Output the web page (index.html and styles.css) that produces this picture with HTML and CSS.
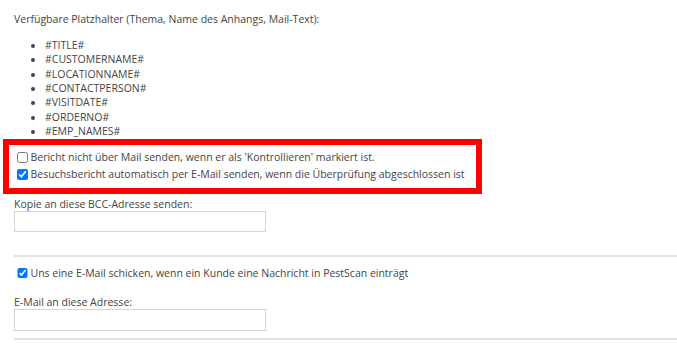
FILE: index.html
```html
<!DOCTYPE html>
<html lang="de">
<head>
<meta charset="utf-8">
<title>E-Mail Einstellungen</title>
<link rel="stylesheet" href="styles.css">
</head>
<body>
<div class="page">
  <p class="intro">Verfügbare Platzhalter (Thema, Name des Anhangs, Mail-Text):</p>
  <ul class="placeholders">
    <li>#TITLE#</li>
    <li>#CUSTOMERNAME#</li>
    <li>#LOCATIONNAME#</li>
    <li>#CONTACTPERSON#</li>
    <li>#VISITDATE#</li>
    <li>#ORDERNO#</li>
    <li>#EMP_NAMES#</li>
  </ul>
  <div class="highlight">
    <label class="check-row"><input class="check" type="checkbox">Bericht nicht über Mail senden, wenn er als 'Kontrollieren' markiert ist.</label>
    <label class="check-row"><input class="check" type="checkbox" checked>Besuchsbericht automatisch per E-Mail senden, wenn die Überprüfung abgeschlossen ist</label>
  </div>
  <label class="field-label field-label-bcc">Kopie an diese BCC-Adresse senden:</label>
  <input class="text-input" type="text">
  <div class="divider divider-first"></div>
  <label class="check-row check-row-notify"><input class="check" type="checkbox" checked>Uns eine E-Mail schicken, wenn ein Kunde eine Nachricht in PestScan einträgt</label>
  <label class="field-label field-label-mail">E-Mail an diese Adresse:</label>
  <input class="text-input text-input-tall" type="text">
  <div class="divider divider-last"></div>
</div>
</body>
</html>
```
FILE: styles.css
```css
html, body {
  margin: 0;
  padding: 0;
  background: #ffffff;
}

body {
  font-family: "Open Sans", "Liberation Sans", sans-serif;
  font-size: 10.5px;
  line-height: 14.4px;
  color: #444444;
}

.page {
  padding: 12px 0 0 14px;
}

.intro {
  margin: 0 0 11.4px 0;
}

.placeholders {
  margin: 0;
  padding-left: 31px;
  list-style: disc;
}

.placeholders li {
  line-height: 14.4px;
}

.highlight {
  margin-left: -11px;
  width: 479px;
  box-sizing: border-box;
  border: 6px solid #ff0000;
  padding: 4.5px 0 4.5px 5px;
}

.check-row {
  display: flex;
  align-items: center;
  height: 17px;
  line-height: 17px;
  white-space: nowrap;
}

.check {
  width: 10.5px;
  height: 10.5px;
  margin: 0 3px 0 3px;
  flex: none;
}

.field-label {
  display: block;
}

.field-label-bcc {
  margin-top: 3px;
}

.field-label-mail {
  margin-top: 13.3px;
}

.text-input {
  display: block;
  width: 252px;
  height: 21px;
  box-sizing: border-box;
  margin: 0;
  border: 1px solid #d6d6d6;
  background: #ffffff;
  padding: 0 4px;
  font: inherit;
  outline: none;
}

.text-input-tall {
  height: 22px;
}

.divider {
  height: 0;
  border-top: 2px solid #e2e2e2;
}

.divider-first {
  margin-top: 23px;
}

.check-row-notify {
  margin-top: 7.5px;
}

.divider-last {
  margin-top: 7px;
}
```
